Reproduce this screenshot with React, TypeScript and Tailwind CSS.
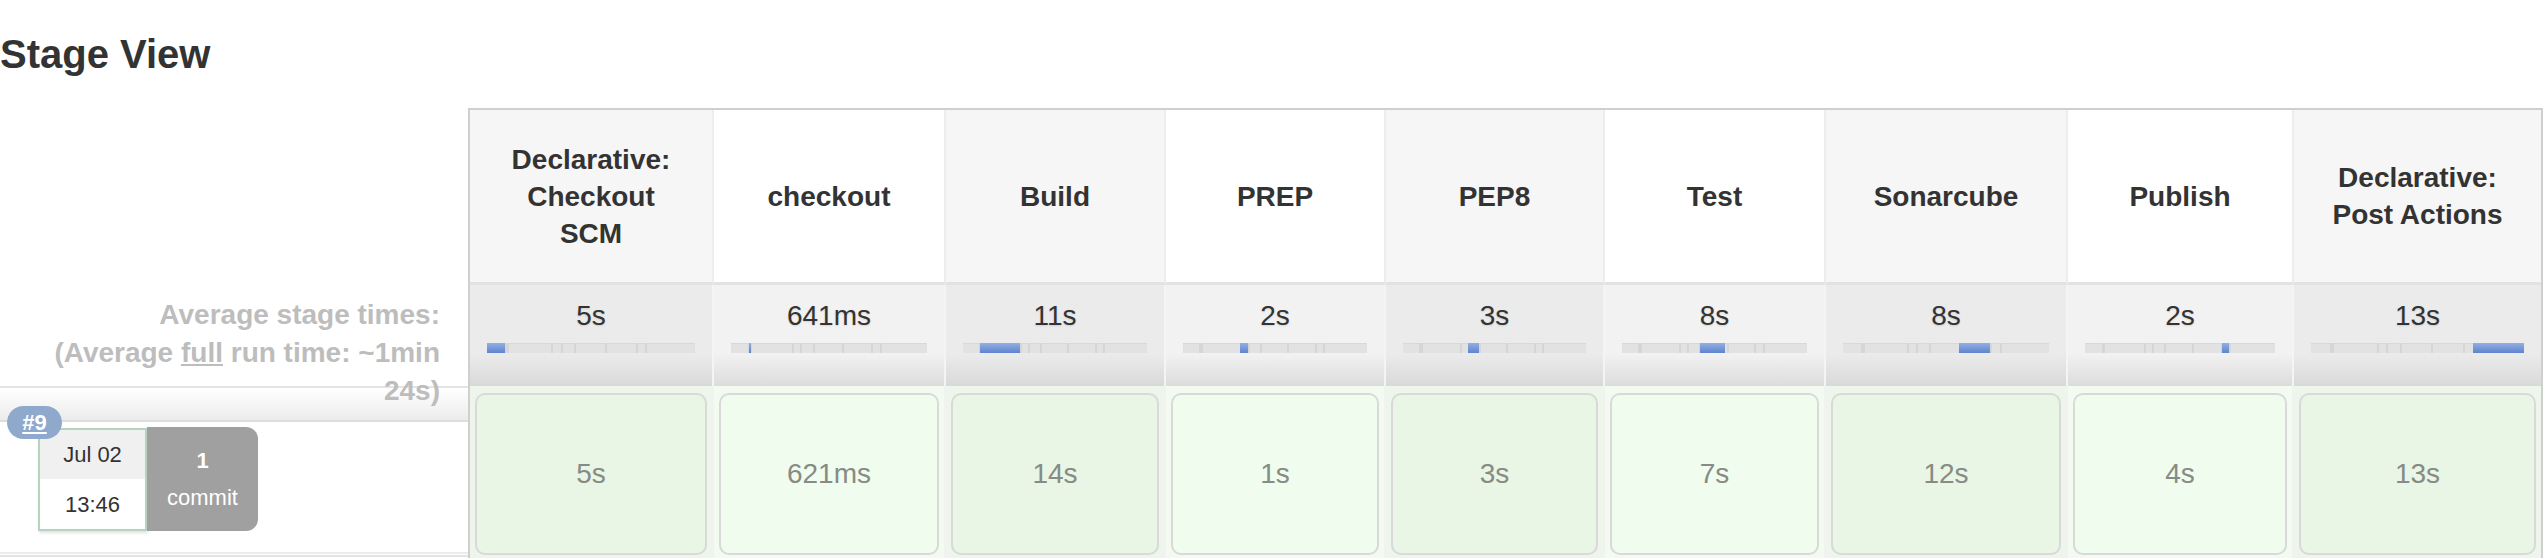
import React from "react";

type Stage = {
  name: string[];
  avg: string;
  seg: [number, number];
  run: string;
};

const stages: Stage[] = [
  { name: ["Declarative:", "Checkout", "SCM"], avg: "5s", seg: [0, 8.7], run: "5s" },
  { name: ["checkout"], avg: "641ms", seg: [9.2, 9.8], run: "621ms" },
  { name: ["Build"], avg: "11s", seg: [9.4, 30.9], run: "14s" },
  { name: ["PREP"], avg: "2s", seg: [31, 35.4], run: "1s" },
  { name: ["PEP8"], avg: "3s", seg: [35.3, 41.7], run: "3s" },
  { name: ["Test"], avg: "8s", seg: [42, 55.8], run: "7s" },
  { name: ["Sonarcube"], avg: "8s", seg: [56.5, 71.5], run: "12s" },
  { name: ["Publish"], avg: "2s", seg: [72, 76], run: "4s" },
  { name: ["Declarative:", "Post Actions"], avg: "13s", seg: [76, 100], run: "13s" },
];

const ticks = [8.7, 9.7, 31, 35.4, 41.7, 56.5, 71.5, 76];

function Bar({ seg }: { seg: [number, number] }) {
  return (
    <div className="relative mx-[17px] mt-[8px] h-[10px] bg-[#e2e2e2] shadow-[inset_0_1px_1px_rgba(0,0,0,0.05)]">
      {ticks.map((t) => (
        <div
          key={t}
          className="absolute top-0 h-full w-[2px] bg-[#d6d6d6]"
          style={{ left: `${t}%` }}
        />
      ))}
      <div
        className="absolute top-0 h-full min-w-[2px] bg-gradient-to-b from-[#93afe4] to-[#5d84cd]"
        style={{ left: `${seg[0]}%`, width: `${seg[1] - seg[0]}%` }}
      />
    </div>
  );
}

export default function App() {
  return (
    <div className="min-h-[560px] overflow-hidden bg-white font-['Liberation_Sans',Arial,sans-serif] text-[#333]">
      <h2 className="h-[108px] pt-[31px] text-[40px] font-bold leading-[46px] text-[#333]">
        Stage View
      </h2>
      <div className="flex">
        {/* left column */}
        <div className="w-[468px] shrink-0">
          <div className="h-[177px]" />
          <div className="relative z-10 h-[101px] pt-[11px] pr-[28px] text-right text-[28px] font-bold leading-[38px] text-[#bdbdbd]">
            <div>Average stage times:</div>
            <div>
              (Average <span className="underline">full</span> run time: ~1min
              <br />
              24s)
            </div>
          </div>
          <div className="border-t-2 border-[#e4e4e4]">
            <div className="relative h-[164px]">
              <div className="h-[34px] border-b-2 border-[#dedede] bg-gradient-to-b from-white to-[#ececec]" />
              <div className="absolute left-[7px] top-[18px] z-10 flex h-[33px] w-[55px] items-center justify-center rounded-full bg-[#8fa9cc] text-[22px] font-bold text-white underline">
                #9
              </div>
              <div className="ml-[38px] mt-[6px] flex">
                <div className="flex h-[103px] w-[109px] flex-col border-2 border-[#b6d3c2] shadow-[1px_2px_3px_rgba(0,0,0,0.12)]">
                  <div className="flex h-[49px] items-center justify-center bg-[#f0f0f0] text-[22px] text-[#333]">
                    Jul 02
                  </div>
                  <div className="flex flex-1 items-center justify-center bg-white text-[22px] text-[#333]">
                    13:46
                  </div>
                </div>
                <div className="-mt-[1px] flex h-[104px] w-[111px] flex-col items-center justify-center rounded-r-[12px] bg-[#a0a0a0] text-[22px] leading-[37px] text-white">
                  <div className="font-bold">1</div>
                  <div>commit</div>
                </div>
              </div>
            </div>
            <div className="h-[3px] border-t-2 border-[#ececec]" />
            <div className="border-t-2 border-[#e4e4e4]" />
          </div>
        </div>

        {/* table */}
        <div className="border-x-2 border-t-2 border-[#cfcfcf]">
          <div className="grid grid-cols-[244px_232px_220px_220px_219px_221px_242px_226px_247px]">
            {stages.map((s, i) => (
              <div
                key={"h" + i}
                className={
                  "flex h-[175px] items-center justify-center border-b-[3px] border-b-[#e2e2e2] text-center text-[28px] font-bold leading-[37px] text-[#333] " +
                  (i % 2 === 0 ? "bg-[#f6f6f6] " : "bg-white ") +
                  (i < 8 ? "border-r-2 border-r-[#ededed]" : "")
                }
              >
                <div>
                  {s.name.map((n) => (
                    <div key={n}>{n}</div>
                  ))}
                </div>
              </div>
            ))}
            {stages.map((s, i) => (
              <div
                key={"a" + i}
                className={
                  "h-[101px] pt-[12px] text-center " +
                  (i % 2 === 0
                    ? "bg-[linear-gradient(to_bottom,#ebebeb_0%,#ebebeb_68%,#d9d9d9_100%)] "
                    : "bg-[linear-gradient(to_bottom,#f2f2f2_0%,#f2f2f2_68%,#dcdcdc_100%)] ") +
                  (i < 8 ? "border-r-2 border-r-[#f4f4f4]" : "")
                }
              >
                <div className="text-[28px] leading-[38px] text-[#333] [text-shadow:0_1px_2px_rgba(0,0,0,0.12)]">
                  {s.avg}
                </div>
                <Bar seg={s.seg} />
              </div>
            ))}
            {stages.map((s, i) => (
              <div
                key={"b" + i}
                className={
                  "px-[5px] pt-[7px] pb-[3px] " +
                  (i % 2 === 0 ? "bg-[#eef6ec] " : "bg-[#f3fbf1] ") +
                  (i < 8 ? "border-r-2 border-r-[#f2f2f2]" : "")
                }
              >
                <div
                  className={
                    "flex h-[162px] items-center justify-center rounded-[10px] border-2 border-[#d8d9d8] text-[28px] text-[#868b86] " +
                    (i % 2 === 0 ? "bg-[#e9f5e5]" : "bg-[#f0fdee]")
                  }
                >
                  {s.run}
                </div>
              </div>
            ))}
          </div>
        </div>
      </div>
    </div>
  );
}
